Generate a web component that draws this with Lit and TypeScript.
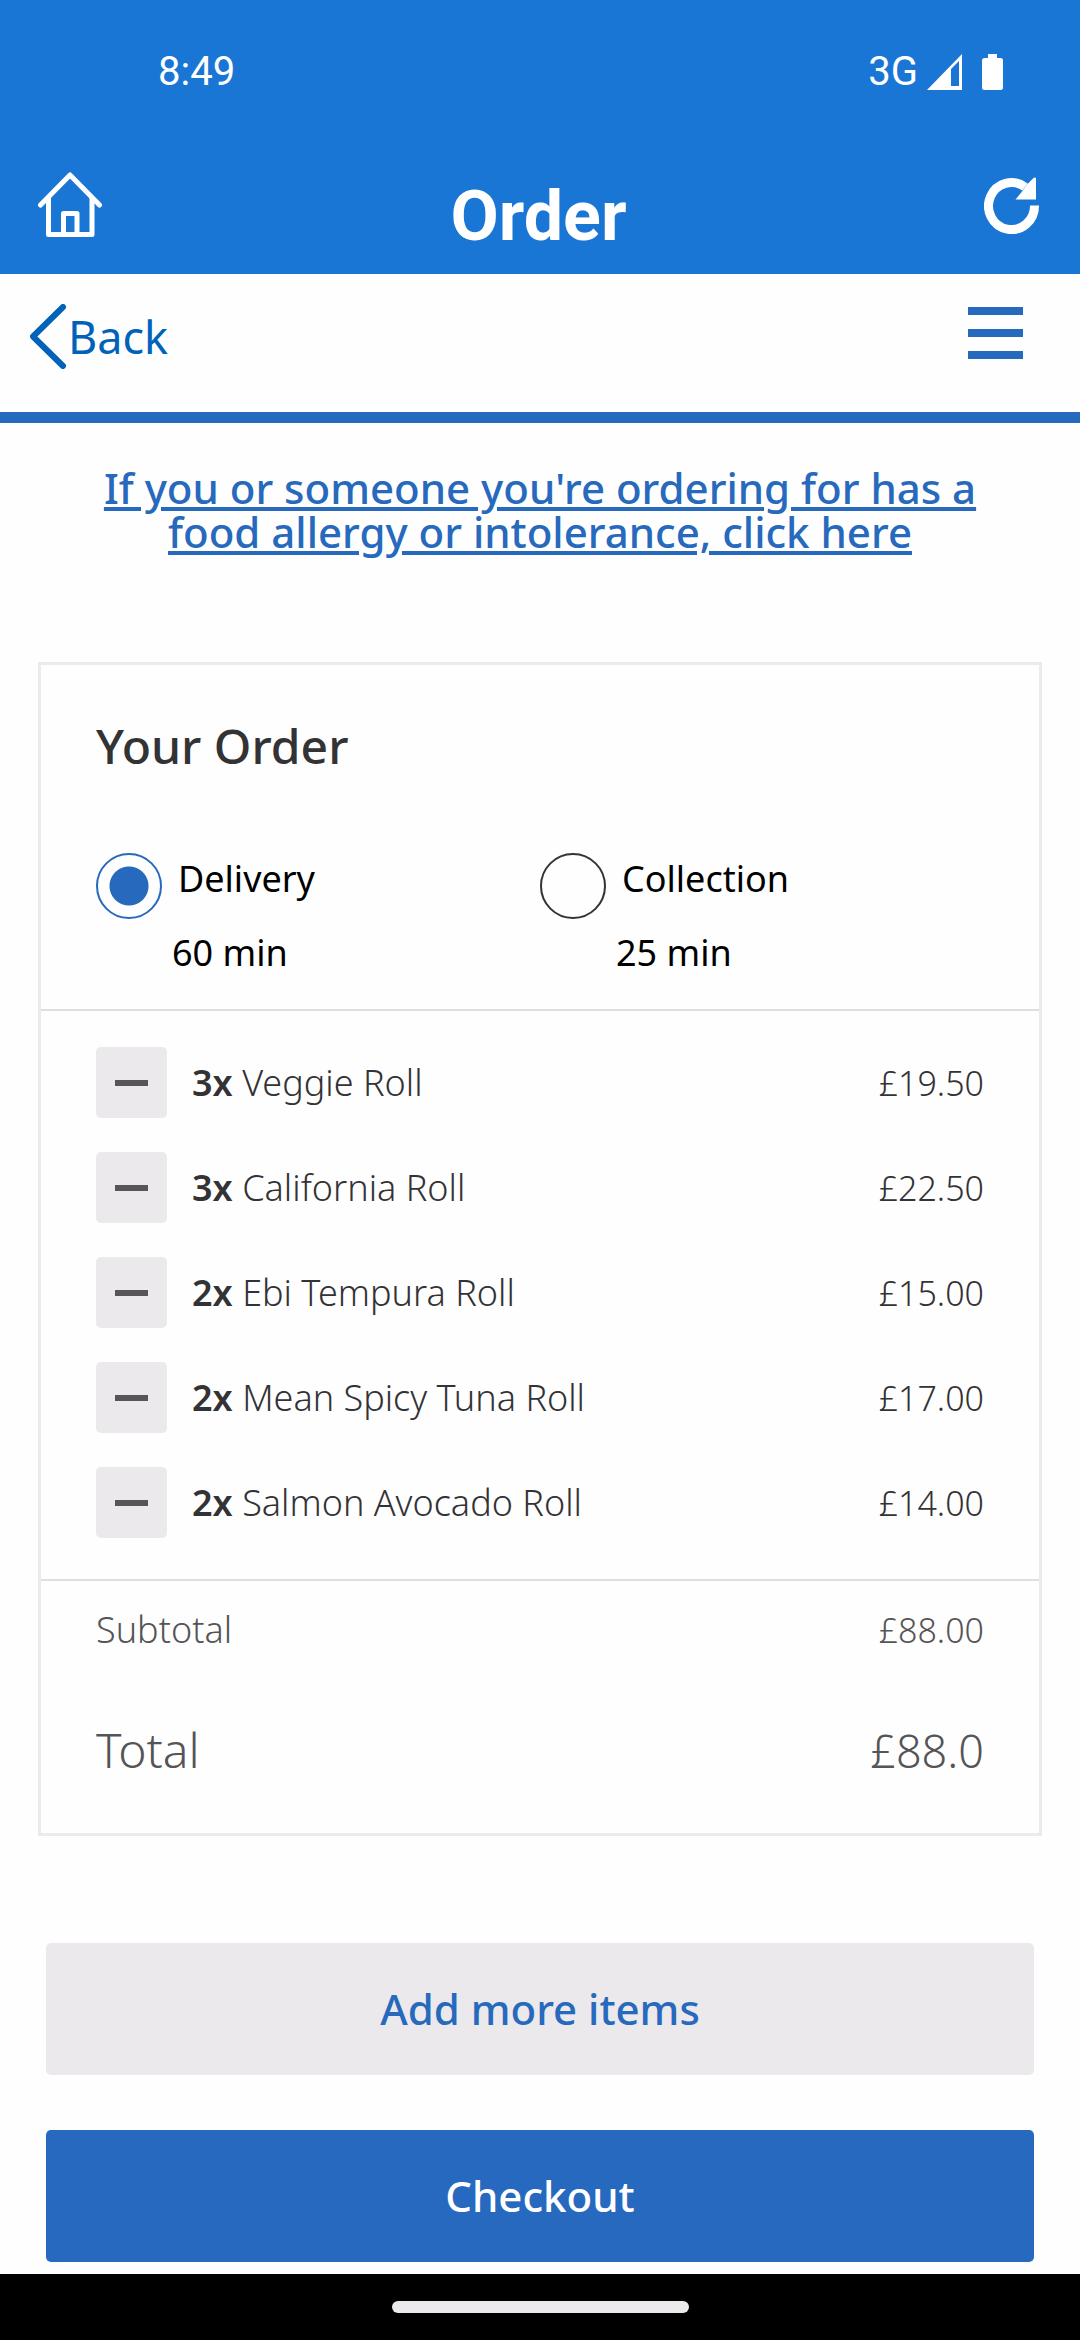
import { LitElement, html, css } from "lit";
import { customElement, property, state } from "lit/decorators.js";

interface OrderLine {
  qty: number;
  name: string;
  price: string;
}

@customElement("status-header")
class StatusHeader extends LitElement {
  @property() heading = "";

  static styles = css`
    :host {
      display: block;
      background: #1a76d5;
      color: #fff;
      font-family: Roboto, "Liberation Sans", sans-serif;
    }
    .status {
      display: flex;
      align-items: center;
      justify-content: space-between;
      padding: 48px 77px 48px 158px;
      font-size: 40px;
      line-height: 48px;
    }
    .signals {
      display: flex;
      align-items: center;
    }
    .signal {
      margin-left: 9px;
      margin-right: 20px;
    }
    .bar {
      display: grid;
      grid-template-columns: 1fr auto 1fr;
      align-items: start;
      padding: 27px 40px 13px 37px;
    }
    .icon {
      display: flex;
      border: 0;
      padding: 0;
      background: none;
      color: inherit;
      justify-self: start;
    }
    .end {
      justify-self: end;
      margin-top: 6px;
    }
    .title {
      margin: 0;
      font-size: 70px;
      line-height: 90px;
      font-weight: 700;
    }
  `;

  render() {
    return html`
      <div class="status">
        <span>8:49</span>
        <div class="signals">
          <span>3G</span>
          <svg class="signal" width="35" height="36" viewBox="0 0 35 36" fill="#fff" aria-hidden="true">
            <path fill-rule="evenodd" d="M35 0V36H0ZM24 15V32H32V7Z" />
          </svg>
          <svg width="21" height="36" viewBox="0 0 21 36" fill="#fff" aria-hidden="true">
            <path d="M6 0H15V4H18.500Q21 4 21 6.500V33.500Q21 36 18.500 36H2.500Q0 36 0 33.500V6.500Q0 4 2.500 4H6Z" />
          </svg>
        </div>
      </div>
      <div class="bar">
        <button class="icon" aria-label="Home">
          <svg width="66" height="66" viewBox="0 0 66 66" fill="none" stroke="#fff" stroke-width="5" stroke-linecap="round" stroke-linejoin="round" aria-hidden="true">
            <path d="M3.500 34 33 4 62.500 34" />
            <path d="M11.500 27V63.500H55V27" />
            <path d="M26.500 63V42.500H40V63" />
          </svg>
        </button>
        <h1 class="title">${this.heading}</h1>
        <button class="icon end" aria-label="Refresh">
          <svg width="56" height="58" viewBox="0 0 56 58" aria-hidden="true">
            <path d="M50.500 28.500A23 23.500 0 1 1 41 10" fill="none" stroke="#fff" stroke-width="9" />
            <path d="M52 1V22.500H31.500L38 14.500 43 7.500 49.500 1Q51 0 52 1Z" fill="#fff" />
          </svg>
        </button>
      </div>
    `;
  }
}

@customElement("app-root")
class AppRoot extends LitElement {
  @state() private method = "delivery";

  private lines: OrderLine[] = [
    { qty: 3, name: "Veggie Roll", price: "£19.50" },
    { qty: 3, name: "California Roll", price: "£22.50" },
    { qty: 2, name: "Ebi Tempura Roll", price: "£15.00" },
    { qty: 2, name: "Mean Spicy Tuna Roll", price: "£17.00" },
    { qty: 2, name: "Salmon Avocado Roll", price: "£14.00" },
  ];

  private methods = [
    { id: "delivery", label: "Delivery", time: "60 min" },
    { id: "collection", label: "Collection", time: "25 min" },
  ];

  static styles = css`
    :host {
      display: flex;
      flex-direction: column;
      min-height: 100vh;
      background: #fefefe;
      color: #333235;
      font-family: "Noto Sans", "Open Sans", sans-serif;
      font-size: 36px;
      line-height: 52px;
    }
    .toolbar {
      display: flex;
      align-items: flex-start;
      justify-content: space-between;
      padding: 30px 57px 43px 30px;
      border-bottom: 11px solid #2769bd;
    }
    .plain {
      display: flex;
      align-items: center;
      border: 0;
      padding: 0;
      background: none;
      color: #0062b8;
      font: inherit;
      font-size: 45px;
      line-height: 65px;
      text-decoration: none;
    }
    .content {
      flex: 1;
      padding: 43px 38px 11px;
    }
    .allergy {
      margin: 0 0 108px;
      padding: 0 40px;
      text-align: center;
      font-size: 42px;
      line-height: 44px;
      font-weight: 500;
    }
    .allergy a {
      color: #2769bd;
      text-decoration-thickness: 4px;
      text-underline-offset: 3px;
    }
    .card {
      border: 3px solid #ebebec;
    }
    .title {
      margin: 0;
      padding: 51px 55px 77px;
      font-size: 48px;
      line-height: 60px;
      font-weight: 500;
    }
    .methods {
      display: grid;
      grid-template-columns: 1fr 1fr;
      margin: 0;
      padding: 0 55px 30px;
      border: 0;
      border-bottom: 2px solid #dedede;
      color: #000;
    }
    .method {
      display: grid;
      grid-template-columns: auto 1fr;
      gap: 8px 16px;
    }
    .radio {
      appearance: none;
      box-sizing: border-box;
      width: 66px;
      height: 66px;
      margin: 0;
      border: 2px solid #333235;
      border-radius: 50%;
    }
    .radio:checked {
      border-color: #2769bd;
      background: radial-gradient(circle, #2769bd 19px, transparent 20px);
    }
    .time {
      grid-column: 1 / -1;
      padding-left: 76px;
    }
    .lines {
      display: grid;
      gap: 34px;
      margin: 0;
      padding: 36px 55px 41px;
      border-bottom: 2px solid #dedede;
      list-style: none;
      font-weight: 300;
    }
    .line {
      display: flex;
      align-items: center;
      gap: 25px;
    }
    .name {
      flex: 1;
    }
    .qty {
      font-weight: 600;
    }
    .price {
      font-size: 34px;
    }
    .remove {
      display: grid;
      place-items: center;
      width: 71px;
      height: 71px;
      border: 0;
      padding: 0;
      border-radius: 5px;
      background: #ebe9eb;
    }
    .dash {
      width: 33px;
      height: 6px;
      background: #575556;
    }
    .totals {
      display: grid;
      grid-template-columns: 1fr auto;
      align-items: baseline;
      row-gap: 64px;
      margin: 0;
      padding: 23px 55px 52px;
      color: #555456;
      font-weight: 300;
    }
    .totals dd {
      margin: 0;
      text-align: right;
    }
    .grand {
      font-size: 48px;
      line-height: 60px;
    }
    .sum {
      font-size: 45px;
      line-height: 60px;
    }
    .actions {
      display: grid;
      gap: 55px;
      padding: 107px 8px 0;
    }
    .action {
      height: 132px;
      border: 0;
      border-radius: 5px;
      font: inherit;
      font-size: 42px;
      font-weight: 500;
      color: #2769bd;
      background: #ebe9eb;
    }
    .primary {
      color: #fff;
      background: #2669bf;
    }
    .gesture {
      display: grid;
      place-items: center;
      height: 66px;
      background: #000;
    }
    .pill {
      width: 297px;
      height: 12px;
      border-radius: 6px;
      background: #eceaec;
    }
  `;

  render() {
    return html`
      <status-header heading="Order"></status-header>
      <nav class="toolbar">
        <a class="plain" href="#back">
          <svg width="38" height="65" viewBox="0 0 38 65" fill="none" stroke="#0062b8" stroke-width="6" stroke-linecap="round" stroke-linejoin="round" aria-hidden="true">
            <path d="M33 3 3 32.500 33 62" />
          </svg>
          <span>Back</span>
        </a>
        <button class="plain" aria-label="Menu">
          <svg width="55" height="65" viewBox="0 0 55 65" fill="#2769bd" aria-hidden="true">
            <path d="M0 3H55V11H0ZM0 25H55V33H0ZM0 47H55V55H0Z" />
          </svg>
        </button>
      </nav>
      <main class="content">
        <p class="allergy">
          <a href="#allergy">If you or someone you're ordering for has a food allergy or intolerance, click here</a>
        </p>
        <section class="card">
          <h2 class="title">Your Order</h2>
          <fieldset class="methods">
            ${this.methods.map(
              (m) => html`
                <div class="method">
                  <input
                    class="radio"
                    type="radio"
                    name="method"
                    id=${m.id}
                    .checked=${this.method === m.id}
                    @change=${() => (this.method = m.id)}
                  />
                  <label for=${m.id}>${m.label}</label>
                  <span class="time">${m.time}</span>
                </div>
              `
            )}
          </fieldset>
          <ul class="lines">
            ${this.lines.map(
              (l) => html`
                <li class="line">
                  <button class="remove" aria-label="Remove one ${l.name}"><span class="dash"></span></button>
                  <span class="name"><span class="qty">${l.qty}x</span> ${l.name}</span>
                  <span class="price">${l.price}</span>
                </li>
              `
            )}
          </ul>
          <dl class="totals">
            <dt>Subtotal</dt>
            <dd class="price">£88.00</dd>
            <dt class="grand">Total</dt>
            <dd class="sum">£88.0</dd>
          </dl>
        </section>
        <div class="actions">
          <button class="action">Add more items</button>
          <button class="action primary">Checkout</button>
        </div>
      </main>
      <footer class="gesture"><div class="pill"></div></footer>
    `;
  }
}
